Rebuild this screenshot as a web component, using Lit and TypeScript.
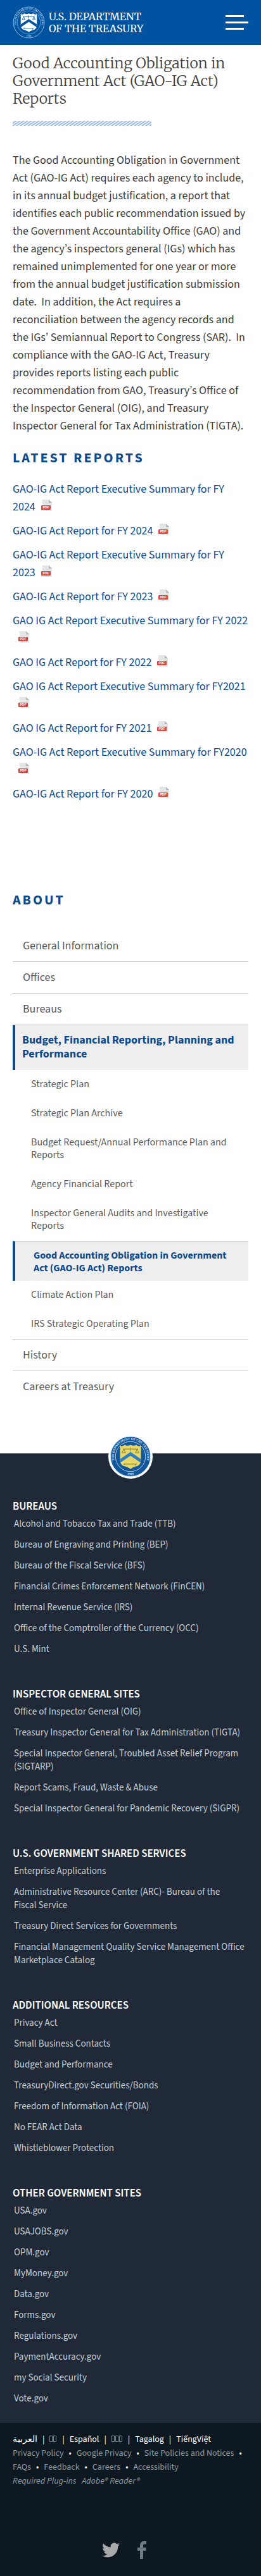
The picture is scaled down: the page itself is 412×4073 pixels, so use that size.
import { LitElement, html, css, svg } from "lit";
import { customElement } from "lit/decorators.js";

interface NavItem {
  label: string;
  active?: boolean;
  children?: NavItem[];
}

const REPORTS: string[] = [
  "GAO-IG Act Report Executive Summary for FY 2024",
  "GAO-IG Act Report for FY 2024",
  "GAO-IG Act Report Executive Summary for FY 2023",
  "GAO-IG Act Report for FY 2023",
  "GAO IG Act Report Executive Summary for FY 2022",
  "GAO IG Act Report for FY 2022",
  "GAO IG Act Report Executive Summary for FY2021",
  "GAO IG Act Report for FY 2021",
  "GAO-IG Act Report Executive Summary for FY2020",
  "GAO-IG Act Report for FY 2020",
];

const NAV: NavItem[] = [
  { label: "General Information" },
  { label: "Offices" },
  { label: "Bureaus" },
  {
    label: "Budget, Financial Reporting, Planning and Performance",
    active: true,
    children: [
      { label: "Strategic Plan" },
      { label: "Strategic Plan Archive" },
      { label: "Budget Request/Annual Performance Plan and Reports" },
      { label: "Agency Financial Report" },
      { label: "Inspector General Audits and Investigative Reports" },
      { label: "Good Accounting Obligation in Government Act (GAO-IG Act) Reports", active: true },
      { label: "Climate Action Plan" },
      { label: "IRS Strategic Operating Plan" },
    ],
  },
  { label: "History" },
  { label: "Careers at Treasury" },
];

const FOOTER: { title: string; links: string[] }[] = [
  {
    title: "BUREAUS",
    links: [
      "Alcohol and Tobacco Tax and Trade (TTB)",
      "Bureau of Engraving and Printing (BEP)",
      "Bureau of the Fiscal Service (BFS)",
      "Financial Crimes Enforcement Network (FinCEN)",
      "Internal Revenue Service (IRS)",
      "Office of the Comptroller of the Currency (OCC)",
      "U.S. Mint",
    ],
  },
  {
    title: "INSPECTOR GENERAL SITES",
    links: [
      "Office of Inspector General (OIG)",
      "Treasury Inspector General for Tax Administration (TIGTA)",
      "Special Inspector General, Troubled Asset Relief Program (SIGTARP)",
      "Report Scams, Fraud, Waste & Abuse",
      "Special Inspector General for Pandemic Recovery (SIGPR)",
    ],
  },
  {
    title: "U.S. GOVERNMENT SHARED SERVICES",
    links: [
      "Enterprise Applications",
      "Administrative Resource Center (ARC)- Bureau of the Fiscal\u00a0Service",
      "Treasury Direct Services for Governments",
      "Financial Management Quality Service Management Office Marketplace Catalog",
    ],
  },
  {
    title: "ADDITIONAL RESOURCES",
    links: [
      "Privacy Act",
      "Small Business Contacts",
      "Budget and Performance",
      "TreasuryDirect.gov Securities/Bonds",
      "Freedom of Information Act (FOIA)",
      "No FEAR Act Data",
      "Whistleblower Protection",
    ],
  },
  {
    title: "OTHER GOVERNMENT SITES",
    links: [
      "USA.gov",
      "USAJOBS.gov",
      "OPM.gov",
      "MyMoney.gov",
      "Data.gov",
      "Forms.gov",
      "Regulations.gov",
      "PaymentAccuracy.gov",
      "my Social Security",
      "Vote.gov",
    ],
  },
];

const POLICIES: string[] = [
  "Privacy Policy",
  "Google Privacy",
  "Site Policies and Notices",
  "FAQs",
  "Feedback",
  "Careers",
  "Accessibility",
];

/* Treasury seal: outer ring with lettering, shield with scales, chevron and key. */
const seal = (id: string, ring: string, line: string, shield: string, mark: string, chevron: string) => svg`
  <defs>
    <path id=${id + "-top"} d="M17.2 72.9 A40 40 0 1 1 82.8 72.9" />
    <path id=${id + "-low"} d="M28 89 A45 45 0 0 0 72 89" />
  </defs>
  <circle cx="50" cy="50" r="48" fill=${ring} stroke=${line} stroke-width="1.6" />
  <circle cx="50" cy="50" r="36" fill="none" stroke=${line} stroke-width="1.2" />
  <text font-family="Liberation Serif, serif" font-weight="700" font-size="7.6" fill=${line}>
    <textPath href=${"#" + id + "-top"} startOffset="50%" text-anchor="middle">THE DEPARTMENT OF THE TREASURY</textPath>
  </text>
  <text font-family="Liberation Serif, serif" font-weight="700" font-size="8" fill=${line}>
    <textPath href=${"#" + id + "-low"} startOffset="50%" text-anchor="middle">1789</textPath>
  </text>
  <path fill=${shield} d="M25 24 Q31 27 36 22 Q43 26 50 22 Q57 26 64 22 Q69 27 75 24 V60 Q74 72 62 74 Q54 76 50 80 Q46 76 38 74 Q26 72 25 60 Z" />
  <path fill=${chevron} d="M25 56 L50 39 L75 56 V65 L50 48 L25 65 Z" />
  <path fill="none" stroke=${mark} stroke-width="1.6" d="M32 32 H68 M50 28 V38 M34 32 L30 41 H38 Z M66 32 L62 41 H70 Z M35 68 H65 M62 68 V72 M35 66 V70" />
`;

@customElement("app-root")
export class AppRoot extends LitElement {
  static styles = css`
    :host {
      display: block;
      background: #fff;
      color: #3d3d3d;
      font-family: "Source Sans 3", "Noto Sans CJK KR", "Open Sans", sans-serif;
    }
    a {
      color: inherit;
      text-decoration: none;
    }
    ul {
      list-style: none;
      margin: 0;
      padding: 0;
    }
    .top {
      display: flex;
      align-items: center;
      justify-content: space-between;
      padding: 10px 20px;
      background: #0053a1;
    }
    .brand {
      display: flex;
      align-items: center;
      gap: 6px;
      color: #fff;
      font: 16px/19px Merriweather, "DejaVu Serif Condensed", serif;
    }
    .brand svg {
      width: 51px;
      height: 51px;
    }
    .menu {
      display: grid;
      gap: 7px;
      width: 36px;
      padding: 0;
      border: 0;
      background: none;
    }
    .menu span {
      height: 3px;
      width: 29px;
      background: #fff;
    }
    .menu .long {
      width: 36px;
    }
    main {
      padding: 15px 20px 0;
    }
    h1 {
      margin: 0;
      font: 300 23px/28px Merriweather, "Liberation Serif", serif;
    }
    .stripe {
      display: block;
      width: 219px;
      height: 8px;
      margin-top: 21px;
    }
    .intro {
      margin: 41px 0 0;
      font-size: 18px;
      line-height: 28px;
    }
    h2 {
      margin: 0;
      color: #0b4a8c;
      font-size: 22px;
      line-height: 28px;
      letter-spacing: 3px;
      text-transform: uppercase;
    }
    .latest {
      margin-top: 22px;
    }
    .reports {
      display: grid;
      gap: 10px;
      padding-top: 22px;
      color: #0b4a8c;
      font-size: 18px;
      line-height: 28px;
    }
    .pdf {
      width: 17px;
      height: 18px;
      margin-left: 9px;
      vertical-align: -1px;
    }
    .about {
      margin-top: 139px;
    }
    .nav {
      margin-top: 34px;
      color: #5b5b5b;
      font-size: 18px;
      line-height: 22px;
    }
    .nav > li + li {
      border-top: 1px solid #c6c6c6;
    }
    .nav a {
      display: block;
      padding: 14px 16px 13px;
    }
    .nav a.on {
      padding: 13px 12px 14px 11px;
      border-left: 4px solid #0b4a8c;
      background: #eee;
      color: #0b4a8c;
      font-weight: 700;
    }
    .nav .sub {
      font-size: 16px;
      line-height: 20px;
    }
    .nav .sub a {
      padding: 12px 29px 14px;
    }
    .nav .sub a.on {
      padding: 12px 29px 10px;
      border-top: 1px solid #c6c6c6;
    }
    footer {
      display: flow-root;
      margin-top: 81px;
      background: #1f2937;
      color: #c5cdd3;
    }
    .medal {
      display: grid;
      place-items: center;
      width: 70px;
      height: 70px;
      margin: -30px auto 0;
      border-radius: 50%;
      background: #fff;
    }
    .medal svg {
      width: 66px;
      height: 66px;
    }
    .groups {
      display: grid;
      gap: 41px;
      padding: 32px 20px 20px;
    }
    h3 {
      margin: 0;
      color: #fff;
      font-size: 17px;
      line-height: 25px;
      font-weight: 600;
    }
    .groups li {
      padding: 4px 2px 8px;
      font-size: 15px;
      line-height: 21px;
    }
    .legal {
      padding: 15px 20px 27px;
      background: #0d1820;
      color: #8e979d;
      font-size: 14px;
      line-height: 22px;
    }
    .langs,
    .policies {
      display: flex;
      flex-wrap: wrap;
    }
    .langs {
      color: #fff;
    }
    .langs li + li::before {
      content: "|";
      margin: 0 8px;
    }
    .policies li:not(:last-child)::after {
      content: "•";
      margin: 0 8px;
      color: #fff;
    }
    .box {
      display: inline-block;
      width: 3px;
      height: 8px;
      margin-right: 1px;
      border: 1px solid #7d868c;
    }
    .plugins {
      margin: 0;
      font-style: italic;
    }
    .social {
      display: flex;
      justify-content: center;
      gap: 28px;
      margin-top: 84px;
      padding-right: 20px;
    }
    .social svg {
      display: block;
      height: 28px;
    }
  `;

  private renderPdf() {
    return html`<svg class="pdf" viewBox="0 0 17 18" role="img" aria-label="PDF">
      <path fill="#e4e6e6" d="M2 0h10l5 5v13H2z" />
      <path fill="#b4b8ba" d="M12 0l5 5h-5z" />
      <rect y="9" width="15" height="7" rx="1" fill="#e2453c" />
      <text x="7.5" y="14.3" font-size="5" font-weight="700" font-family="Liberation Sans, sans-serif" fill="#fff" text-anchor="middle">PDF</text>
    </svg>`;
  }

  private renderNav(items: NavItem[]): unknown {
    return items.map(
      (n) => html`<li>
        <a href="#" class=${n.active ? "on" : ""}>${n.label}</a>
        ${n.children ? html`<ul class="sub">${this.renderNav(n.children)}</ul>` : ""}
      </li>`,
    );
  }

  render() {
    return html`
      <header class="top">
        <a class="brand" href="#">
          <svg viewBox="0 0 100 100" aria-hidden="true">${seal("head", "none", "#b9d3ec", "#fff", "#0053a1", "#0053a1")}</svg>
          <span>U.S. DEPARTMENT<br />OF THE TREASURY</span>
        </a>
        <button class="menu" type="button" aria-label="Menu">
          <span></span><span class="long"></span><span></span>
        </button>
      </header>
      <main>
        <h1>Good Accounting Obligation in Government Act (GAO-IG Act) Reports</h1>
        <svg class="stripe" aria-hidden="true">
          <defs>
            <pattern id="hatch" width="6" height="8" patternUnits="userSpaceOnUse">
              <rect width="6" height="8" fill="#e3ecf6" />
              <path d="M-6 8L6 0M0 8L12 0M-12 8L0 0" stroke="#8fb0d6" stroke-width="1.2" />
            </pattern>
          </defs>
          <rect width="219" height="8" fill="url(#hatch)" />
        </svg>
        <p class="intro">
          The Good Accounting Obligation in Government Act (GAO-IG Act) requires each agency to include, in its annual
          budget justification, a report that identifies each public recommendation issued by the Government
          Accountability Office (GAO) and the agency’s inspectors general (IGs) which has remained unimplemented for one
          year or more from the annual budget justification submission date.&nbsp; In addition, the Act requires a
          reconciliation between the agency records and the IGs’ Semiannual Report to Congress (SAR).&nbsp; In
          compliance with the GAO-IG Act, Treasury provides reports listing each public recommendation from GAO,
          Treasury’s Office of the Inspector General (OIG), and Treasury Inspector General for Tax Administration
          (TIGTA).
        </p>
        <h2 class="latest">Latest Reports</h2>
        <ul class="reports">
          ${REPORTS.map((r) => html`<li><a href="#">${r}${this.renderPdf()}</a></li>`)}
        </ul>
        <h2 class="about">About</h2>
        <nav aria-label="About"><ul class="nav">${this.renderNav(NAV)}</ul></nav>
      </main>
      <footer>
        <div class="medal">
          <svg viewBox="0 0 100 100" aria-hidden="true">${seal("foot", "#12569c", "#dbe8f2", "#e8d667", "#8f8f3a", "#2f7fc4")}</svg>
        </div>
        <div class="groups">
          ${FOOTER.map(
            (g) => html`<section>
              <h3>${g.title}</h3>
              <ul>${g.links.map((l) => html`<li><a href="#">${l}</a></li>`)}</ul>
            </section>`,
          )}
        </div>
        <div class="legal">
          <ul class="langs">
            <li><a href="#" lang="ar">العربية</a></li>
            <li><a href="#" aria-label="Chinese"><span class="box"></span><span class="box"></span></a></li>
            <li><a href="#" lang="es">Español</a></li>
            <li><a href="#" aria-label="Korean"><span class="box"></span><span class="box"></span><span class="box"></span></a></li>
            <li><a href="#" lang="tl">Tagalog</a></li>
            <li><a href="#" lang="vi">TiếngViệt</a></li>
          </ul>
          <ul class="policies">${POLICIES.map((p) => html`<li><a href="#">${p}</a></li>`)}</ul>
          <p class="plugins">Required Plug-ins &nbsp; <a href="#">Adobe® Reader®</a></p>
          <div class="social">
            <a href="#" aria-label="Twitter"><svg viewBox="0 0 28 28" width="28" fill="#a9a9a9">
              <path d="M28 5.3a11 11 0 0 1-3.300.900 5.800 5.800 0 0 0 2.500-3.200 11.500 11.500 0 0 1-3.600 1.400 5.750 5.750 0 0 0-9.800 5.200A16.300 16.300 0 0 1 2 3.600a5.750 5.750 0 0 0 1.800 7.700 5.700 5.700 0 0 1-2.600-.7v.1a5.750 5.750 0 0 0 4.600 5.600 5.800 5.800 0 0 1-2.600.1 5.750 5.750 0 0 0 5.400 4A11.500 11.500 0 0 1 0 22.800a16.300 16.300 0 0 0 8.800 2.600c10.600 0 16.700-9 16.300-17.200A11.700 11.700 0 0 0 28 5.300z" />
            </svg></a>
            <a href="#" aria-label="Facebook"><svg viewBox="0 0 14 28" width="14" fill="#6f7a82">
              <path d="M14 .2v4.500h-2.600c-2 0-2.400 1-2.400 2.400v3h4.900l-.6 4.900H9V28H4V15H0v-4.900h4V6.600C4 2.400 6.500 0 10.300 0c1.800 0 3.300.1 3.700.2z" />
            </svg></a>
          </div>
        </div>
      </footer>
    `;
  }
}
